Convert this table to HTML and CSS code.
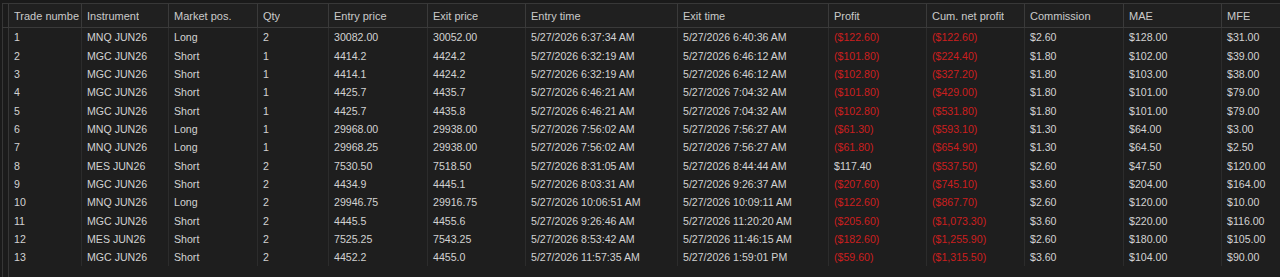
FILE: index.html
```html
<!DOCTYPE html>
<html lang="en">

<head>
    <meta charset="UTF-8">
    <meta name="viewport" content="width=device-width, initial-scale=1.0">
    <title>Trades</title>
    <link rel="stylesheet" href="styles.css">
</head>

<body>
    <div class="sheet">
        <div class="row head">
            <div class="cell gutter"></div>
            <div class="cell"><span>Trade number</span></div>
            <div class="cell"><span>Instrument</span></div>
            <div class="cell"><span>Market pos.</span></div>
            <div class="cell"><span>Qty</span></div>
            <div class="cell"><span>Entry price</span></div>
            <div class="cell"><span>Exit price</span></div>
            <div class="cell"><span>Entry time</span></div>
            <div class="cell"><span>Exit time</span></div>
            <div class="cell"><span>Profit</span></div>
            <div class="cell"><span>Cum. net profit</span></div>
            <div class="cell"><span>Commission</span></div>
            <div class="cell"><span>MAE</span></div>
            <div class="cell"><span>MFE</span></div>
        </div>
        <div id="rows"></div>
        <div class="row rest">
            <div class="cell gutter"></div>
        </div>
    </div>

    <script>
        const trades = [
            ["1", "MNQ JUN26", "Long", "2", "30082.00", "30052.00", "5/27/2026 6:37:34 AM", "5/27/2026 6:40:36 AM", "($122.60)", "($122.60)", "$2.60", "$128.00", "$31.00"],
            ["2", "MGC JUN26", "Short", "1", "4414.2", "4424.2", "5/27/2026 6:32:19 AM", "5/27/2026 6:46:12 AM", "($101.80)", "($224.40)", "$1.80", "$102.00", "$39.00"],
            ["3", "MGC JUN26", "Short", "1", "4414.1", "4424.2", "5/27/2026 6:32:19 AM", "5/27/2026 6:46:12 AM", "($102.80)", "($327.20)", "$1.80", "$103.00", "$38.00"],
            ["4", "MGC JUN26", "Short", "1", "4425.7", "4435.7", "5/27/2026 6:46:21 AM", "5/27/2026 7:04:32 AM", "($101.80)", "($429.00)", "$1.80", "$101.00", "$79.00"],
            ["5", "MGC JUN26", "Short", "1", "4425.7", "4435.8", "5/27/2026 6:46:21 AM", "5/27/2026 7:04:32 AM", "($102.80)", "($531.80)", "$1.80", "$101.00", "$79.00"],
            ["6", "MNQ JUN26", "Long", "1", "29968.00", "29938.00", "5/27/2026 7:56:02 AM", "5/27/2026 7:56:27 AM", "($61.30)", "($593.10)", "$1.30", "$64.00", "$3.00"],
            ["7", "MNQ JUN26", "Long", "1", "29968.25", "29938.00", "5/27/2026 7:56:02 AM", "5/27/2026 7:56:27 AM", "($61.80)", "($654.90)", "$1.30", "$64.50", "$2.50"],
            ["8", "MES JUN26", "Short", "2", "7530.50", "7518.50", "5/27/2026 8:31:05 AM", "5/27/2026 8:44:44 AM", "$117.40", "($537.50)", "$2.60", "$47.50", "$120.00"],
            ["9", "MGC JUN26", "Short", "2", "4434.9", "4445.1", "5/27/2026 8:03:31 AM", "5/27/2026 9:26:37 AM", "($207.60)", "($745.10)", "$3.60", "$204.00", "$164.00"],
            ["10", "MNQ JUN26", "Long", "2", "29946.75", "29916.75", "5/27/2026 10:06:51 AM", "5/27/2026 10:09:11 AM", "($122.60)", "($867.70)", "$2.60", "$120.00", "$10.00"],
            ["11", "MGC JUN26", "Short", "2", "4445.5", "4455.6", "5/27/2026 9:26:46 AM", "5/27/2026 11:20:20 AM", "($205.60)", "($1,073.30)", "$3.60", "$220.00", "$116.00"],
            ["12", "MES JUN26", "Short", "2", "7525.25", "7543.25", "5/27/2026 8:53:42 AM", "5/27/2026 11:46:15 AM", "($182.60)", "($1,255.90)", "$2.60", "$180.00", "$105.00"],
            ["13", "MGC JUN26", "Short", "2", "4452.2", "4455.0", "5/27/2026 11:57:35 AM", "5/27/2026 1:59:01 PM", "($59.60)", "($1,315.50)", "$3.60", "$104.00", "$90.00"]
        ];

        const rowsElement = document.getElementById("rows");

        trades.forEach(trade => {
            const row = document.createElement("div");
            row.classList.add("row");

            const gutter = document.createElement("div");
            gutter.classList.add("cell", "gutter");
            row.appendChild(gutter);

            trade.forEach(value => {
                const cell = document.createElement("div");
                cell.classList.add("cell");
                // negativa belopp visas i rött
                if (value.startsWith("(")) {
                    cell.classList.add("neg");
                }
                cell.textContent = value;
                row.appendChild(cell);
            });

            rowsElement.appendChild(row);
        });
    </script>
</body>

</html>
```

FILE: styles.css
```css
* {
    margin: 0;
    padding: 0;
    box-sizing: border-box;
}

body,
html {
    height: 100%;
    overflow: hidden;
    background: #1a1a1a;
    font-family: 'Liberation Sans', Arial, sans-serif;
    font-size: 10.6px;
    color: #d2d2d2;
}

.sheet {
    --cols: 7px 73px 87px 89px 71px 99px 98px 152px 151px 98px 98px 99px 98px 98px;
    display: flex;
    flex-direction: column;
    height: calc(100% - 3px);
    margin: 3px 0 0 2px;
    width: 1317px;
    background: #1e1e1e;
}

.row {
    display: grid;
    grid-template-columns: var(--cols);
    height: 18.35px;
}

.cell {
    display: flex;
    align-items: center;
    padding: 0 2px 0 5px;
    border-right: 1px solid #2c2c2c;
    white-space: nowrap;
    overflow: hidden;
}

.cell span {
    min-width: 0;
    overflow: hidden;
}

.gutter {
    padding: 0;
    border-left: 1px solid #363636;
    border-right: 1px solid #363636;
    background: #1b1b1b;
}

.head {
    height: 25px;
    border-top: 1px solid #383838;
    border-bottom: 1px solid #3a3a3a;
    background: #202020;
    color: #cacaca;
    font-size: 11px;
}

.head .cell {
    border-right-color: #3a3a3a;
}

.neg {
    color: #cc1e1e;
}

.rest {
    flex: 1;
    height: auto;
}
```
